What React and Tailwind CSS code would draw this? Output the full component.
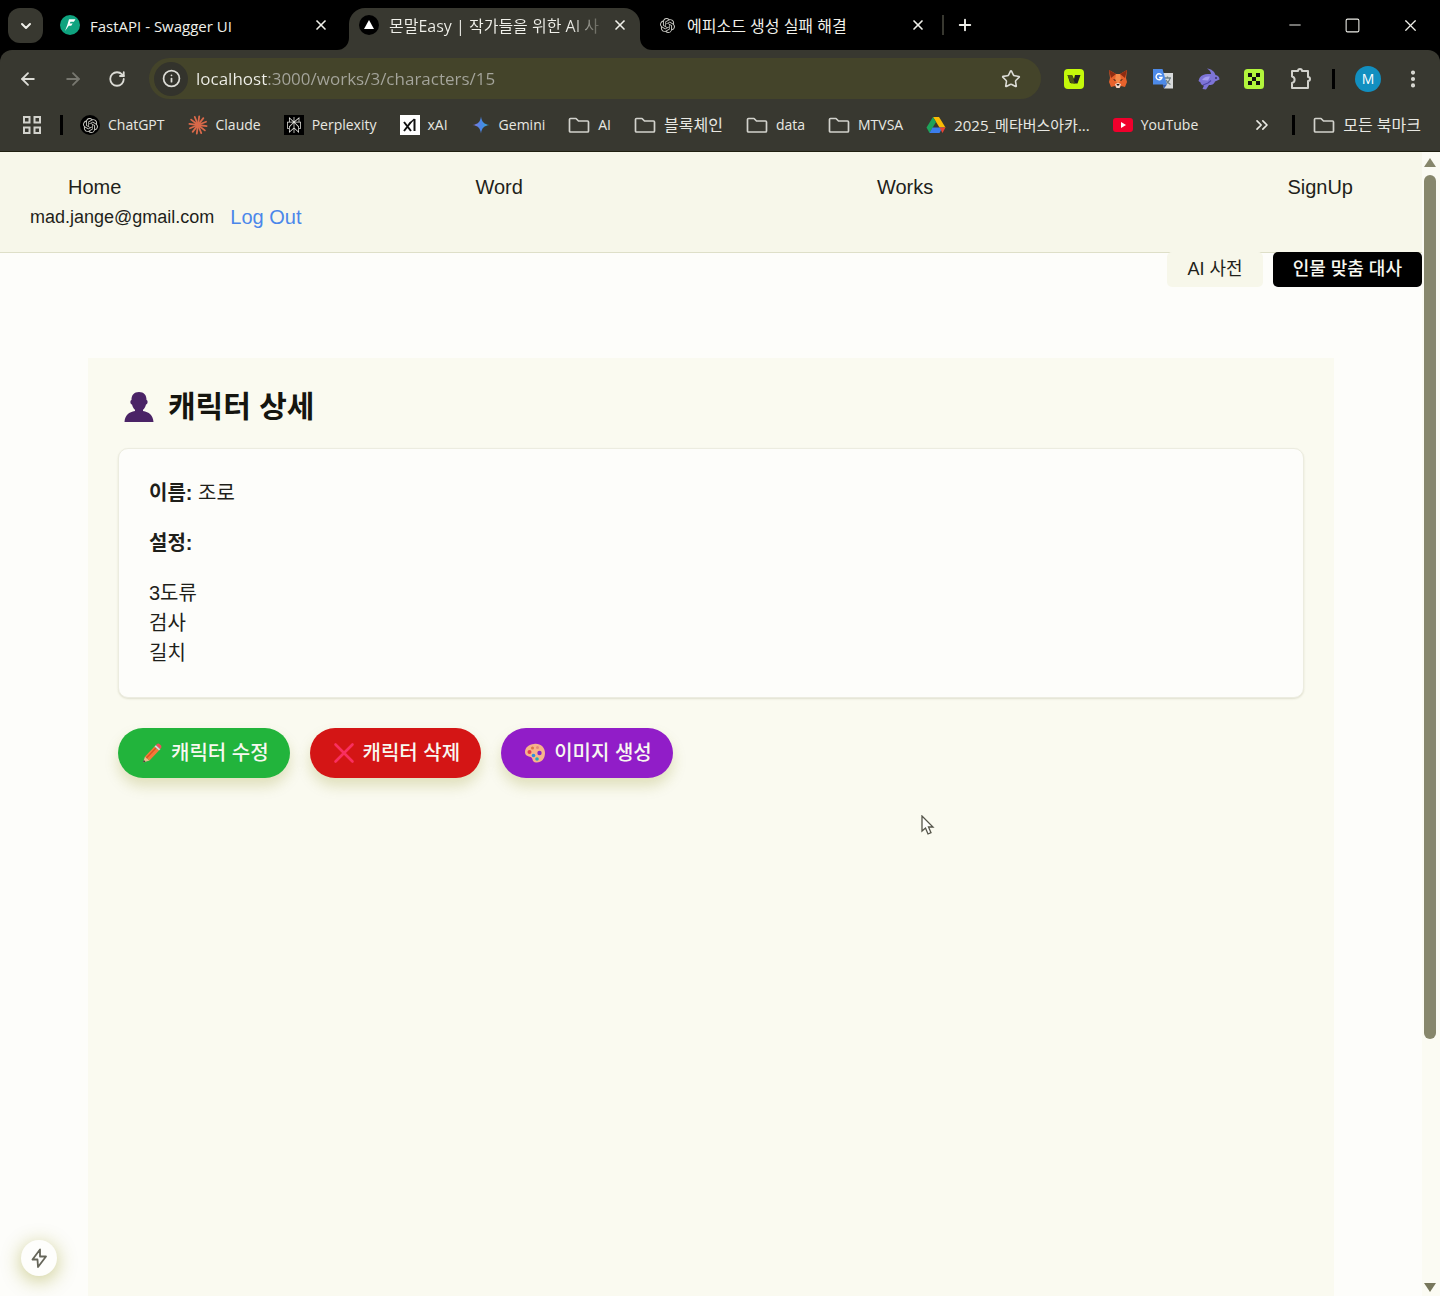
import React from "react";
import { ArrowLeft, ArrowRight, RotateCw, ChevronDown, X, Plus, Minus, Square, Star, Info, ChevronsRight, EllipsisVertical } from "lucide-react";
import { SiOpenai, SiPerplexity } from "react-icons/si";

const uiFont = "font-['Open_Sans','Noto_Sans_CJK_KR',sans-serif]";
const pageFont = "font-['Liberation_Sans','Noto_Sans_CJK_KR',sans-serif]";

function FastApiIcon() {
  return (
    <svg viewBox="0 0 20 20" className="size-5 shrink-0">
      <circle cx="10" cy="10" r="10" fill="#0fa37f" />
      <path d="M9 4.200h6.500l-1.600 2.500h-3.400l-.8 1.800h3l-1.500 2.300h-2.400L5 16l2.300-6z" fill="#fff" />
    </svg>
  );
}

function VercelIcon() {
  return (
    <svg viewBox="0 0 20 20" className="size-5 shrink-0">
      <circle cx="10" cy="10" r="10" fill="#000" />
      <path d="M10 5l5 9H5z" fill="#fff" />
    </svg>
  );
}

function ClaudeIcon() {
  const rays = [0, 30, 60, 90, 120, 150, 180, 210, 240, 270, 300, 330];
  return (
    <svg viewBox="0 0 20 20" className="size-5 shrink-0" stroke="#d9694a" strokeWidth="1.8" strokeLinecap="round">
      {rays.map((a) => (
        <path key={a} d="M10 10V1.3" transform={`rotate(${a + 8} 10 10)`} />
      ))}
    </svg>
  );
}

function XaiIcon() {
  return (
    <svg viewBox="0 0 20 20" className="size-5 shrink-0">
      <path fill="#fff" d="M0 0h20v20H0z" />
      <path d="M4 7l7 9M11 7l-7 9" stroke="#111" strokeWidth="2" />
      <path d="M14.5 4v12" stroke="#111" strokeWidth="2" />
      <path d="M9 9l5.500-5" stroke="#111" strokeWidth="1.4" />
    </svg>
  );
}

function GeminiIcon() {
  return (
    <svg viewBox="0 0 20 20" className="size-5 shrink-0">
      <defs>
        <linearGradient id="gem" x1="0" x2="1">
          <stop offset="0" stopColor="#8a78d8" />
          <stop offset=".5" stopColor="#4a86e8" />
          <stop offset="1" stopColor="#35a7d0" />
        </linearGradient>
      </defs>
      <path d="M10 1.500C10.800 7 13 9.200 18.500 10 13 10.800 10.800 13 10 18.500 9.200 13 7 10.800 1.500 10 7 9.200 9.200 7 10 1.500z" fill="url(#gem)" />
    </svg>
  );
}

function FolderIcon() {
  return (
    <svg viewBox="0 0 22 20" className="h-5 w-[22px] shrink-0" fill="none" stroke="#d2d2cc" strokeWidth="1.7" strokeLinejoin="round">
      <path d="M1.500 16V4.500q0-1 1-1h5.500l2.500 2.500h9q1 0 1 1v9q0 1-1 1h-17q-1 0-1-1z" />
    </svg>
  );
}

function DriveIcon() {
  return (
    <svg viewBox="0 0 20 20" className="size-5 shrink-0">
      <path d="M7 2h6l6.500 10.500h-6z" fill="#fbbc04" />
      <path d="M7 2L.5 12.500 3.500 18 10 7z" fill="#1ea35a" />
      <path d="M6.500 12.500h10L13.500 18h-10z" fill="#3b7ded" />
      <path d="M13.500 12.500h6L16.500 18z" fill="#e94335" />
    </svg>
  );
}

function YouTubeIcon() {
  return (
    <svg viewBox="0 0 20 20" className="size-5 shrink-0">
      <rect y="3" width="20" height="14" rx="3" fill="#f0002c" />
      <path d="M8 7l5 3-5 3z" fill="#fff" />
    </svg>
  );
}

function FoxIcon() {
  return (
    <svg viewBox="0 0 20 20" className="size-5">
      <path d="M1 1l7 4h4l7-4-1 8 1 4-2 5-4-1-1.500 2h-3L7 17l-4 1-2-5 1-4z" fill="#e8622c" />
      <path d="M1 1l7 4-5 4zM19 1l-7 4 5 4z" fill="#8e2c12" />
      <path d="M8 5h4l1 6-3 4-3-4z" fill="#f58a4a" />
      <path d="M7 15l3-1 3 1-1.500 4h-3z" fill="#f2ddd0" />
      <path d="M5 10l3 1-1 1zM15 10l-3 1 1 1zM8.500 15h3l-.5 1.500H9z" fill="#231815" />
    </svg>
  );
}

function TranslateIcon() {
  return (
    <svg viewBox="0 0 22 22" className="size-[22px]">
      <path d="M8 5h13v15.500H12z" fill="#d8dadb" />
      <path d="M12 10h7M15.500 8.500V10M18 10c-.5 3-2.500 5-5 6M14 12c1 2 2.500 3.500 4.500 4.500" stroke="#6f8084" strokeWidth="1.300" fill="none" />
      <path d="M1 1h9.500l4.500 15.500H1z" fill="#4d8ae8" />
      <path d="M10.500 16.500H15L12 20.500z" fill="#2f5bb5" />
      <path d="M9.500 7A3 3 0 1 0 10 9.500H7" stroke="#fff" strokeWidth="1.400" fill="none" />
    </svg>
  );
}

function RabbitIcon() {
  return (
    <svg viewBox="0 0 22 22" className="size-[22px]">
      <path d="M9 .5c4.500.5 7.500 3 8.500 6.500 2.500.5 4 2 4 4.500l-4.500 2c-1 3-3.500 3.500-6 3.500L8 21.500l-3.500-.5L6 17.500C4 17.500 2.500 16 2.500 14.500L.5 13l1-3c2-3 5-4 8-4h3.500C13 4 11.500 2 9 .5z" fill="#7d74d6" />
      <path d="M4 12c2-3 5-4 8-3.500l-2 4z" fill="#a59df0" />
      <circle cx="18" cy="10" r="1" fill="#38306e" />
      <path d="M10 15l3-2.500M5 17l5-2" stroke="#4f46a8" strokeWidth="1.200" />
    </svg>
  );
}

function OkxIcon() {
  return (
    <svg viewBox="0 0 20 20" className="size-5">
      <rect width="20" height="20" rx="3.500" fill="#b2f53c" />
      <path d="M4 4h4v4H4zM12 4h4v4h-4zM8 8h4v4H8zM4 12h4v4H4zM12 12h4v4h-4z" fill="#111" />
    </svg>
  );
}

function WIcon() {
  return (
    <svg viewBox="0 0 20 20" className="size-5">
      <rect width="20" height="20" rx="4" fill="#c4f90a" />
      <path d="M3.500 6h4.500l2 4 1-4h5.500l-3 8.500H9.500L8.500 12l-.5 2H6z" fill="#222" />
      <path d="M3.500 6h4.500l3 8.500H7z" fill="#4c5a12" />
    </svg>
  );
}

function PuzzleIcon() {
  return (
    <svg viewBox="0 0 24 24" className="size-6" fill="none" stroke="#d2d2cc" strokeWidth="2" strokeLinejoin="round">
      <path d="M4 4h6a2 2 0 0 1 4 0h6v6a2 2 0 0 1 0 4v7H4v-5c3.500-1 3.500-5.500 0-6.500z" />
    </svg>
  );
}

function AppsIcon() {
  return (
    <svg viewBox="0 0 20 20" className="size-5" fill="none" stroke="#d2d2cc" strokeWidth="2">
      <path d="M2 2h5.500v5.500H2zM12.500 2H18v5.500h-5.500zM2 12.500h5.500V18H2zM12.500 12.500H18V18h-5.500z" />
    </svg>
  );
}

function PersonIcon() {
  return (
    <svg viewBox="0 0 30 30" className="size-[30px] shrink-0" fill="#4a2366">
      <path d="M15 0c5 0 7.600 3 7.500 8 1.600.3 1.500 4-.5 4.500-.6 2.700-1.800 4.300-3 5.200V19c6 1 10 4 10.500 11h-29C1 23 5 20 11 19v-1.300c-1.200-.9-2.400-2.500-3-5.200-2-.5-2.100-4.200-.5-4.500C7.400 3 10 0 15 0z" />
    </svg>
  );
}

function PencilIcon() {
  return (
    <svg viewBox="0 0 22 22" className="size-[22px] shrink-0">
      <path d="M2 20.500l2-6 4.500 4z" fill="#edb98c" />
      <path d="M2 20.500l.8-2.400 1.700 1.500z" fill="#333" />
      <path d="M4 14.500L13.500 4.500l4.500 4-9.500 10z" fill="#f5793a" />
      <path d="M5.500 16L15 6" stroke="#d9531f" strokeWidth="1.300" />
      <path d="M13.500 4.500l1.500-1.500 4.500 4L18 8.500z" fill="#d5d9dc" />
      <path d="M15 3l1-1q1.500-1 3 .5l1 1q1 1.500 0 2.500l-1 1z" fill="#ed4f59" />
    </svg>
  );
}

function CrossIcon() {
  return (
    <svg viewBox="0 0 22 22" className="size-[22px] shrink-0" stroke="#f92f60" strokeWidth="2.600" strokeLinecap="round">
      <path d="M2.500 2.500l17 17M19.500 2.500l-17 17" />
    </svg>
  );
}

function PaletteIcon() {
  return (
    <svg viewBox="0 0 22 22" className="size-[22px] shrink-0">
      <path d="M10 2C16 1 21 5 21 11s-4 10-9 9.500c-4-.5-3-3.500-4.500-5S1 15 1 10c0-4.500 4-7.500 9-8z" fill="#f7b48a" />
      <circle cx="15.500" cy="11" r="2.200" fill="#8822cc" />
      <circle cx="5.500" cy="10" r="2" fill="#e33b54" />
      <circle cx="8.500" cy="6" r="1.500" fill="#d9754a" />
      <circle cx="13.500" cy="5.500" r="1.500" fill="#e58a7a" />
      <circle cx="9.500" cy="13.500" r="1.800" fill="#2c8fe0" />
      <circle cx="13" cy="17" r="1.800" fill="#21aeb8" />
    </svg>
  );
}

function BoltIcon() {
  return (
    <svg viewBox="0 0 20 20" className="size-5" fill="none" stroke="currentColor" strokeWidth="1.800" strokeLinejoin="round">
      <path d="M11 1.500L3.500 11.500h5l.5 7.500 8-10.500h-6z" />
    </svg>
  );
}

function TabStrip() {
  return (
    <div className="flex h-[50px] shrink-0 items-stretch bg-black text-[#f0f0ea]">
      <button aria-label="탭 검색" className="ml-2 mt-2 flex size-[35px] shrink-0 items-center justify-center rounded-xl bg-[#383830]">
        <ChevronDown size={16} strokeWidth={3} />
      </button>
      <div className="flex w-[306px] items-center gap-2.5 pl-[17px] pr-5">
        <FastApiIcon />
        <span className="flex-1 truncate pt-0.5 text-[15px] leading-6">FastAPI - Swagger UI</span>
        <button aria-label="탭 닫기"><X size={16} strokeWidth={2.5} /></button>
      </div>
      <div className="relative mt-2 flex w-[291px] items-center gap-2.5 rounded-t-2xl bg-[#383830] pb-2 pl-2.5 pr-3">
        <span className="absolute -left-3 bottom-0 size-3 bg-[#383830]"><span className="block size-3 rounded-br-xl bg-black" /></span>
        <span className="absolute -right-3 bottom-0 size-3 bg-[#383830]"><span className="block size-3 rounded-bl-xl bg-black" /></span>
        <VercelIcon />
        <span className="min-w-0 flex-1 whitespace-nowrap bg-gradient-to-r from-[#f0f0ea] from-85% to-[#55554c] bg-clip-text pt-0.5 text-[16px] leading-6 text-transparent">몬말Easy | 작가들을 위한 AI 사</span>
        <button aria-label="탭 닫기"><X size={16} strokeWidth={2.5} /></button>
      </div>
      <div className="flex w-[302px] items-center gap-3 pl-5 pr-4">
        <SiOpenai size={15} color="#c8c8c2" className="shrink-0" />
        <span className="flex-1 truncate pt-0.5 text-[16px] leading-6">에피소드 생성 실패 해결</span>
        <button aria-label="탭 닫기"><X size={16} strokeWidth={2.5} /></button>
      </div>
      <span className="h-5 w-0.5 self-center bg-[#383830]" />
      <button aria-label="새 탭" className="ml-3"><Plus size={18} strokeWidth={2.5} /></button>
      <div className="ml-auto flex items-center gap-10 pr-5">
        <button aria-label="최소화"><Minus size={18} strokeWidth={1.3} /></button>
        <button aria-label="최대화"><Square size={17} strokeWidth={1.5} rx={0} /></button>
        <button aria-label="닫기"><X size={19} strokeWidth={1.5} /></button>
      </div>
    </div>
  );
}

function Toolbar() {
  return (
    <div className="flex h-[57px] items-center pl-[18px] pr-4 text-[#dcdcd6]">
      <div className="flex items-center gap-[25px]">
        <button aria-label="뒤로"><ArrowLeft size={20} strokeWidth={2.2} /></button>
        <button aria-label="앞으로" className="text-[#77776f]"><ArrowRight size={20} strokeWidth={2.2} /></button>
        <button aria-label="새로고침"><RotateCw size={18} strokeWidth={2.4} /></button>
      </div>
      <div className="ml-[23px] flex h-[41px] flex-1 items-center rounded-full bg-[#44442a] pl-[5px] pr-5">
        <span className="flex size-[34px] items-center justify-center rounded-full bg-[#33332c]"><Info size={19} strokeWidth={2.2} /></span>
        <input
          aria-label="주소창"
          defaultValue="localhost:3000/works/3/characters/15"
          className="ml-2 min-w-0 flex-1 bg-[linear-gradient(to_right,#f0f0ea_72px,#a5a59c_72px)] bg-clip-text text-[17px] leading-6 text-transparent outline-none"
        />
        <button aria-label="북마크 추가"><Star size={20} strokeWidth={1.9} /></button>
      </div>
      <div className="ml-[23px] flex items-center gap-6">
        <button aria-label="지갑"><WIcon /></button>
        <button aria-label="메타마스크"><FoxIcon /></button>
        <button aria-label="번역"><TranslateIcon /></button>
        <button aria-label="래빗"><RabbitIcon /></button>
        <button aria-label="거래소"><OkxIcon /></button>
        <button aria-label="확장 프로그램"><PuzzleIcon /></button>
      </div>
      <span className="ml-5 h-5 w-[3px] bg-black" />
      <button className="ml-5 size-[26px] rounded-full bg-[#128fc0] text-sm leading-none text-white">M</button>
      <button aria-label="메뉴" className="ml-[21px]"><EllipsisVertical size={22} strokeWidth={2.5} /></button>
    </div>
  );
}

const bookmarks = [
  [<span className="flex size-5 items-center justify-center rounded-full bg-black"><SiOpenai size={15} color="#c8c8c2" /></span>, "ChatGPT"],
  [<ClaudeIcon />, "Claude"],
  [<span className="flex size-5 items-center justify-center bg-black"><SiPerplexity size={16} color="#e4e4de" /></span>, "Perplexity"],
  [<XaiIcon />, "xAI"],
  [<GeminiIcon />, "Gemini"],
  [<FolderIcon />, "AI"],
  [<FolderIcon />, "블록체인", "text-[16px]"],
  [<FolderIcon />, "data"],
  [<FolderIcon />, "MTVSA"],
  [<DriveIcon />, "2025_메타버스아카...", "text-[15px]"],
  [<YouTubeIcon />, "YouTube"],
];

function BookmarkBar() {
  return (
    <div className="flex h-[44px] items-center pb-2 pl-[22px] pr-[19px] text-[14px] leading-5 text-[#e8e8e2]">
      <button aria-label="앱"><AppsIcon /></button>
      <span className="ml-[18px] h-5 w-[3px] bg-black" />
      <div className="ml-[17px] flex gap-[23px]">
        {bookmarks.map(([icon, label, size]) => (
          <a key={label} href="#" className="flex items-center gap-2 whitespace-nowrap">
            {icon}
            <span className={size}>{label}</span>
          </a>
        ))}
      </div>
      <button aria-label="더보기" className="ml-auto"><ChevronsRight size={20} strokeWidth={2} /></button>
      <span className="ml-5 h-5 w-[3px] bg-black" />
      <button className="ml-[18px] flex items-center gap-2 whitespace-nowrap text-[16px]"><FolderIcon />모든 북마크</button>
    </div>
  );
}

function ActionButton({ tone, icon, label }) {
  return (
    <button className={`flex h-[50px] items-center gap-2 rounded-full pl-[23px] pr-[21px] text-[20px] font-medium leading-[30px] text-[#f8f8f0] shadow-[0_8px_14px_rgba(130,130,0,0.22)] ${tone}`}>
      {icon}{label}
    </button>
  );
}

export default function App() {
  return (
    <div className={`relative flex h-screen flex-col overflow-hidden bg-[#fdfdfa] ${uiFont}`}>
      <TabStrip />
      <div className="shrink-0 bg-black">
        <div className="rounded-t-xl border-b border-[#1f1f10] bg-[#383830]">
          <Toolbar />
          <BookmarkBar />
        </div>
      </div>
      <div className={`flex min-h-0 flex-1 text-[20px] leading-[30px] text-[#1f1f1a] ${pageFont}`}>
        <div className="flex min-w-0 flex-1 flex-col">
          <nav className="shrink-0 border-b border-[#dedfc8] bg-[#f7f7ea] py-5">
            <div className="flex justify-between pl-[68px] pr-[69px]">
              <a href="#">Home</a>
              <a href="#">Word</a>
              <a href="#">Works</a>
              <a href="#">SignUp</a>
            </div>
            <div className="flex gap-4 px-[30px]">
              <span className="text-[18px]">mad.jange@gmail.com</span>
              <button className="text-[#4b87ea]">Log Out</button>
            </div>
          </nav>
          <div className="-mt-px flex shrink-0 justify-end gap-2.5 text-[18px] leading-[35px]">
            <button className="rounded-[5px] bg-[#f7f7ea] px-5">AI 사전</button>
            <button className="rounded-[5px] bg-black px-5 font-medium text-[#f8f8f0]">인물 맞춤 대사</button>
          </div>
          <main className="mx-[88px] mt-[71px] flex-1 bg-[#fafaf0] p-[30px]">
            <h1 className="flex items-center gap-3.5 pl-1.5 text-[30px] font-bold leading-[38px] text-[#15150f]">
              <PersonIcon />캐릭터 상세
            </h1>
            <section className="mt-[22px] rounded-[10px] border border-[#ecece0] bg-[#fdfdfa] px-[30px] py-[29px] shadow-[0_1px_2px_rgba(80,80,20,0.15)]">
              <p><strong>이름:</strong> 조로</p>
              <p className="mt-5"><strong>설정:</strong></p>
              <p className="mt-5">3도류<br />검사<br />길치</p>
            </section>
            <div className="mt-[30px] flex gap-5">
              <ActionButton tone="bg-[#22b43c]" icon={<PencilIcon />} label="캐릭터 수정" />
              <ActionButton tone="bg-[#d41515]" icon={<CrossIcon />} label="캐릭터 삭제" />
              <ActionButton tone="bg-[#911dc8]" icon={<PaletteIcon />} label="이미지 생성" />
            </div>
          </main>
        </div>
        <div className="flex w-[18px] shrink-0 flex-col items-center bg-[#fbfbf3] pb-1 pr-0.5 pt-1.5">
          <svg viewBox="0 0 12 9" className="h-[9px] w-3" fill="#87876c"><path d="M6 0l6 9H0z" /></svg>
          <span className="mt-2 h-[864px] w-3 rounded-full bg-[#87876c]" />
          <svg viewBox="0 0 12 9" className="mt-auto h-[9px] w-3" fill="#77775c"><path d="M0 0h12L6 9z" /></svg>
        </div>
      </div>
      <button aria-label="개발 도구" className="absolute bottom-5 left-[21px] flex size-9 items-center justify-center rounded-full bg-[#fefefc] text-[#66665a] shadow-[0_4px_20px_rgba(140,140,0,0.45)]">
        <BoltIcon />
      </button>
      <svg viewBox="0 0 14 20" className="pointer-events-none absolute left-[921px] top-[815px] h-5 w-3.5" fill="#fefefc" stroke="#55554a" strokeWidth="1.300">
        <path d="M1 1v15l3.500-3 2.500 6 3-1.300-2.500-5.700H12z" />
      </svg>
    </div>
  );
}
